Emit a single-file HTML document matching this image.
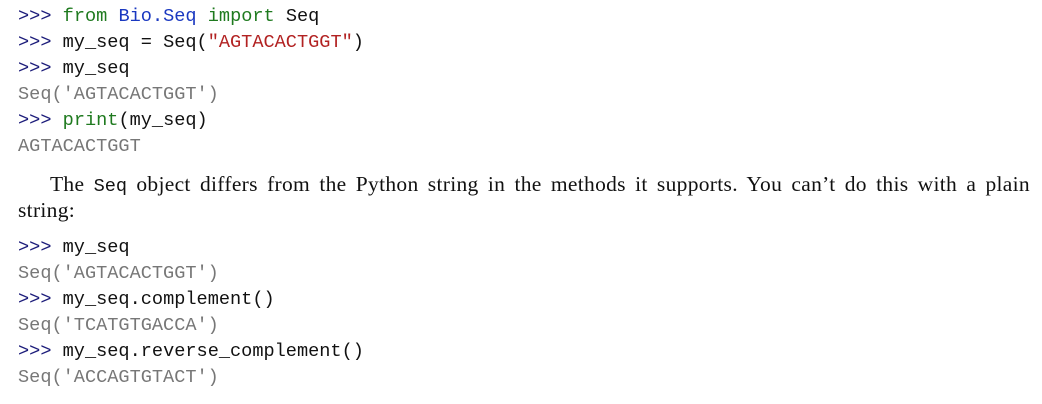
<!DOCTYPE html>
<html><head><style>
body{margin:0;background:#fff;width:1042px;height:404px;overflow:hidden;position:relative}
.c{position:absolute;left:18px;font-family:"Liberation Mono",monospace;font-size:18.6px;line-height:26px;white-space:pre;color:#111}
.p{color:#1c1c7a}.k{color:#1f7a1f}.n{color:#1a38c0}.s{color:#b22222}.o{color:#777}
.t{position:absolute;left:18px;width:1012px;font-family:"Liberation Serif",serif;font-size:21.5px;letter-spacing:0.3px;line-height:26px;color:#111;white-space:nowrap}
.t1{top:171px;left:50px;width:980px;text-align:justify;text-align-last:justify;white-space:normal}
.t2{top:197px}
.t code{font-family:"Liberation Mono",monospace;font-size:18.6px;letter-spacing:0}
</style></head><body>
<div class="c" style="top:4px"><span class="p">&gt;&gt;&gt;</span> <span class="k">from</span> <span class="n">Bio.Seq</span> <span class="k">import</span> Seq
<span class="p">&gt;&gt;&gt;</span> my_seq = Seq(<span class="s">"AGTACACTGGT"</span>)
<span class="p">&gt;&gt;&gt;</span> my_seq
<span class="o">Seq('AGTACACTGGT')</span>
<span class="p">&gt;&gt;&gt;</span> <span class="k">print</span>(my_seq)
<span class="o">AGTACACTGGT</span></div>
<div class="t t1">The <code>Seq</code> object differs from the Python string in the methods it supports. You can’t do this with a plain</div>
<div class="t t2">string:</div>
<div class="c" style="top:235px"><span class="p">&gt;&gt;&gt;</span> my_seq
<span class="o">Seq('AGTACACTGGT')</span>
<span class="p">&gt;&gt;&gt;</span> my_seq.complement()
<span class="o">Seq('TCATGTGACCA')</span>
<span class="p">&gt;&gt;&gt;</span> my_seq.reverse_complement()
<span class="o">Seq('ACCAGTGTACT')</span></div>
</body></html>
